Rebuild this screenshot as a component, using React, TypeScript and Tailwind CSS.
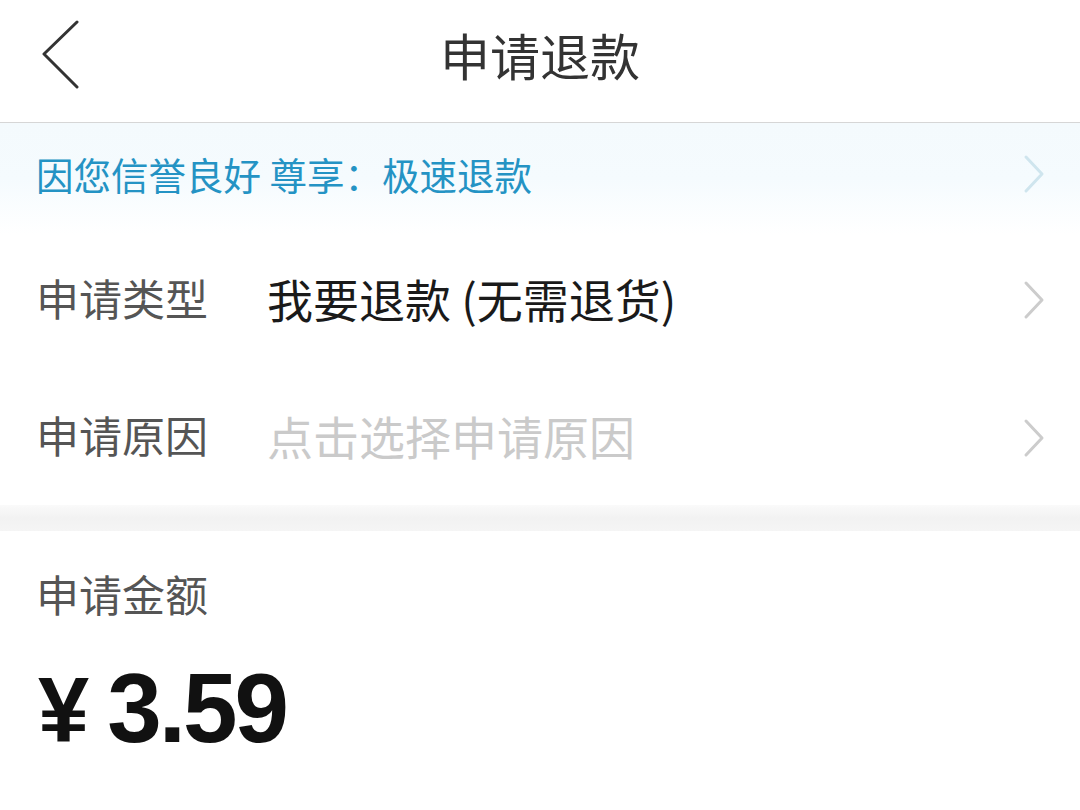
import React from "react";

const Chevron = ({ color }: { color: string }) => (
  <svg width="24" height="40" viewBox="0 0 24 40" fill="none">
    <path d="M4 3 L20 20 L4 37" stroke={color} strokeWidth="3" strokeLinecap="round" strokeLinejoin="round" />
  </svg>
);

export default function App() {
  const cjk = { fontFamily: '"Noto Sans CJK SC", "Noto Sans", sans-serif' };
  return (
    <div className="w-[1080px] h-[810px] bg-white overflow-hidden" style={cjk}>
      {/* Header */}
      <div className="relative h-[123px] flex items-center justify-center border-b border-[#d6d6d6]">
        <svg className="absolute left-[40px] top-[20px]" width="42" height="70" viewBox="0 0 42 70" fill="none">
          <path d="M37 2 L4 34 L37 67" stroke="#333" strokeWidth="3" strokeLinecap="round" strokeLinejoin="round" />
        </svg>
        <div className="text-[50px] leading-none text-[#333] mt-[-14px]">申请退款</div>
      </div>

      {/* Banner */}
      <div className="h-[112px] flex items-center justify-between pl-[36px] pr-[34px] bg-gradient-to-b from-[#f4fafd] via-[#f5fbfe] to-[#ffffff]">
        <div className="text-[37.5px] leading-none text-[#2493c4] mt-[-10px]">因您信誉良好 尊享：极速退款</div>
        <div className="mt-[-10px]"><Chevron color="#cfe5ee" /></div>
      </div>

      {/* Rows */}
      <div className="h-[135px] flex items-center pl-[36px] pr-[34px]">
        <div className="w-[231px] text-[43px] leading-none text-[#555] mt-[-10px]">申请类型</div>
        <div className="flex-1 text-[46px] leading-none text-[#1a1a1a] mt-[-10px]">我要退款 (无需退货)</div>
        <div className="mt-[-6px]"><Chevron color="#cccccc" /></div>
      </div>
      <div className="h-[135px] flex items-center pl-[36px] pr-[34px]">
        <div className="w-[231px] text-[43px] leading-none text-[#555] mt-[-6px]">申请原因</div>
        <div className="flex-1 text-[46px] leading-none text-[#cacaca] mt-[-6px]">点击选择申请原因</div>
        <Chevron color="#cccccc" />
      </div>

      {/* Separator */}
      <div className="h-[26px] bg-gradient-to-b from-[#fafafa] via-[#f2f2f2] to-[#f5f5f5]" />

      {/* Amount */}
      <div className="pl-[36px] pt-[41px]">
        <div className="text-[43px] leading-none text-[#555]">申请金额</div>
        <div className="mt-[44px] flex items-baseline leading-none text-[#111]" style={{ fontFamily: '"Liberation Sans", Arial, sans-serif' }}>
          <span className="text-[92px] font-bold mr-[18px] ml-[2px]">¥</span>
          <span className="text-[98px] font-bold tracking-[-3px]">3.59</span>
        </div>
      </div>
    </div>
  );
}
